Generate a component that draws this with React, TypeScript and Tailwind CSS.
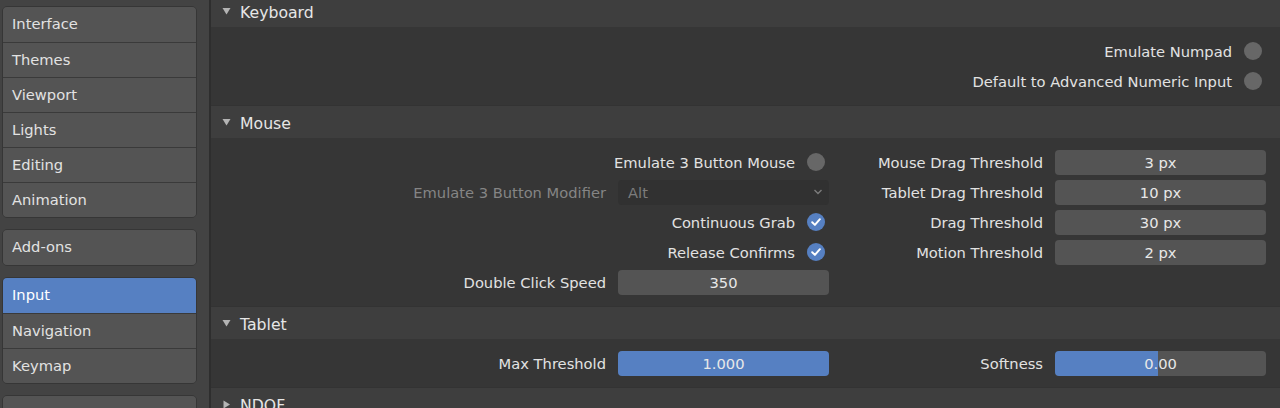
import { ReactNode } from "react";

const sidebarGroups = [
    ["Interface", "Themes", "Viewport", "Lights", "Editing", "Animation"],
    ["Add-ons"],
    ["Input", "Navigation", "Keymap"],
    ["System", "Save & Load", "File Paths"],
];

function SidebarGroup({ items }: { items: string[] }) {
    return (
        <div className="shrink-0 flex flex-col rounded-[5px] border border-[#363636] overflow-hidden">
            {items.map((item, i) => (
                <div
                    key={item}
                    className={
                        "h-[35px] shrink-0 flex items-center pl-[9px] " +
                        (i > 0 ? "border-t border-[#3a3a3a] " : "") +
                        (item === "Input"
                            ? "bg-[#5680c2] text-white"
                            : "bg-[#545454] text-[#e2e2e2]")
                    }
                >
                    {item}
                </div>
            ))}
        </div>
    );
}

function Triangle({ open }: { open: boolean }) {
    return open ? (
        <svg width="9" height="8" viewBox="0 0 9 8">
            <polygon points="0.5,1 8.5,1 4.5,7.5" fill="#b4b4b4" />
        </svg>
    ) : (
        <svg width="9" height="9" viewBox="0 0 9 9">
            <polygon points="1.5,0.5 8,4.5 1.5,8.5" fill="#b4b4b4" />
        </svg>
    );
}

function Panel({
    title,
    open = true,
    children,
}: {
    title: string;
    open?: boolean;
    children?: ReactNode;
}) {
    return (
        <div className="shrink-0 flex flex-col">
            <div className="h-[33px] shrink-0 flex items-center gap-[9px] pl-[11px] bg-[#3e3e3e] text-[15.7px] text-[#e6e6e6] border-t border-[#333333]">
                <Triangle open={open} />
                <span className="pt-[3px]">{title}</span>
            </div>
            {open && (
                <div className="bg-[#363636] py-3 flex flex-col gap-1.5 pr-[14px]">
                    {children}
                </div>
            )}
        </div>
    );
}

function Dot({ checked }: { checked?: boolean }) {
    if (!checked) {
        return <div className="w-[18px] h-[18px] rounded-full bg-[#676767] shrink-0" />;
    }
    return (
        <div className="w-[18px] h-[18px] rounded-full bg-[#5680c2] shrink-0 flex items-center justify-center">
            <svg width="12" height="12" viewBox="0 0 12 12">
                <path
                    d="M2.2 6.3 L4.9 8.9 L9.9 3.2"
                    fill="none"
                    stroke="#ffffff"
                    strokeWidth="2"
                    strokeLinecap="round"
                    strokeLinejoin="round"
                />
            </svg>
        </div>
    );
}

function CheckRow({ label, checked }: { label: string; checked?: boolean }) {
    return (
        <div className="h-6 flex items-center justify-end gap-3 pr-[4px]">
            <span className="text-[#e2e2e2] pt-[2px]">{label}</span>
            <Dot checked={checked} />
        </div>
    );
}

function FieldRow({
    label,
    children,
    dim,
}: {
    label: string;
    children: ReactNode;
    dim?: boolean;
}) {
    return (
        <div className="h-6 flex items-center gap-3">
            <span
                className={
                    "flex-1 text-right whitespace-nowrap pt-[2px] " +
                    (dim ? "text-[#858585]" : "text-[#e2e2e2]")
                }
            >
                {label}
            </span>
            {children}
        </div>
    );
}

function NumField({ value, fill }: { value: string; fill?: "full" | "half" }) {
    const bg =
        fill === "full"
            ? "bg-[#5680c2]"
            : fill === "half"
              ? "bg-[linear-gradient(to_right,#5680c2_49%,#545454_49%)]"
              : "bg-[#545454]";
    return (
        <div
            className={
                "w-[211px] h-[25px] rounded-[4px] flex items-center justify-center pt-[2px] text-[#e8e8e8] " +
                bg
            }
        >
            {value}
        </div>
    );
}

function Column({ children }: { children: ReactNode }) {
    return <div className="w-[424px] flex flex-col gap-1.5">{children}</div>;
}

export default function App() {
    return (
        <div
            className="w-[1280px] h-[408px] overflow-hidden flex bg-[#2e2e2e] text-[14.7px]"
            style={{ fontFamily: '"DejaVu Sans", "Noto Sans", sans-serif' }}
        >
            <div className="w-[209px] shrink-0 bg-[#434343] pl-[2px] pr-[12px] pt-[6px] flex flex-col gap-[11px]">
                {sidebarGroups.map((g) => (
                    <SidebarGroup key={g[0]} items={g} />
                ))}
            </div>
            <div className="flex-1 pl-[2px] -mt-[6px] flex flex-col">
                <Panel title="Keyboard">
                    <CheckRow label="Emulate Numpad" />
                    <CheckRow label="Default to Advanced Numeric Input" />
                </Panel>
                <Panel title="Mouse">
                    <div className="flex justify-end gap-[13px]">
                        <Column>
                            <CheckRow label="Emulate 3 Button Mouse" />
                            <FieldRow label="Emulate 3 Button Modifier" dim>
                                <div className="w-[211px] h-[25px] rounded-[4px] bg-[#313131] flex items-center justify-between pl-[10px] pr-[6px] text-[#7c7c7c]">
                                    <span className="pt-[2px]">Alt</span>
                                    <svg width="10" height="8" viewBox="0 0 10 8">
                                        <path
                                            d="M1.5 2 L5 5.5 L8.5 2"
                                            fill="none"
                                            stroke="#7c7c7c"
                                            strokeWidth="1.4"
                                        />
                                    </svg>
                                </div>
                            </FieldRow>
                            <CheckRow label="Continuous Grab" checked />
                            <CheckRow label="Release Confirms" checked />
                            <FieldRow label="Double Click Speed">
                                <NumField value="350" />
                            </FieldRow>
                        </Column>
                        <Column>
                            <FieldRow label="Mouse Drag Threshold">
                                <NumField value="3 px" />
                            </FieldRow>
                            <FieldRow label="Tablet Drag Threshold">
                                <NumField value="10 px" />
                            </FieldRow>
                            <FieldRow label="Drag Threshold">
                                <NumField value="30 px" />
                            </FieldRow>
                            <FieldRow label="Motion Threshold">
                                <NumField value="2 px" />
                            </FieldRow>
                        </Column>
                    </div>
                </Panel>
                <Panel title="Tablet">
                    <div className="flex justify-end gap-[13px]">
                        <Column>
                            <FieldRow label="Max Threshold">
                                <NumField value="1.000" fill="full" />
                            </FieldRow>
                        </Column>
                        <Column>
                            <FieldRow label="Softness">
                                <NumField value="0.00" fill="half" />
                            </FieldRow>
                        </Column>
                    </div>
                </Panel>
                <Panel title="NDOF" open={false} />
            </div>
        </div>
    );
}
